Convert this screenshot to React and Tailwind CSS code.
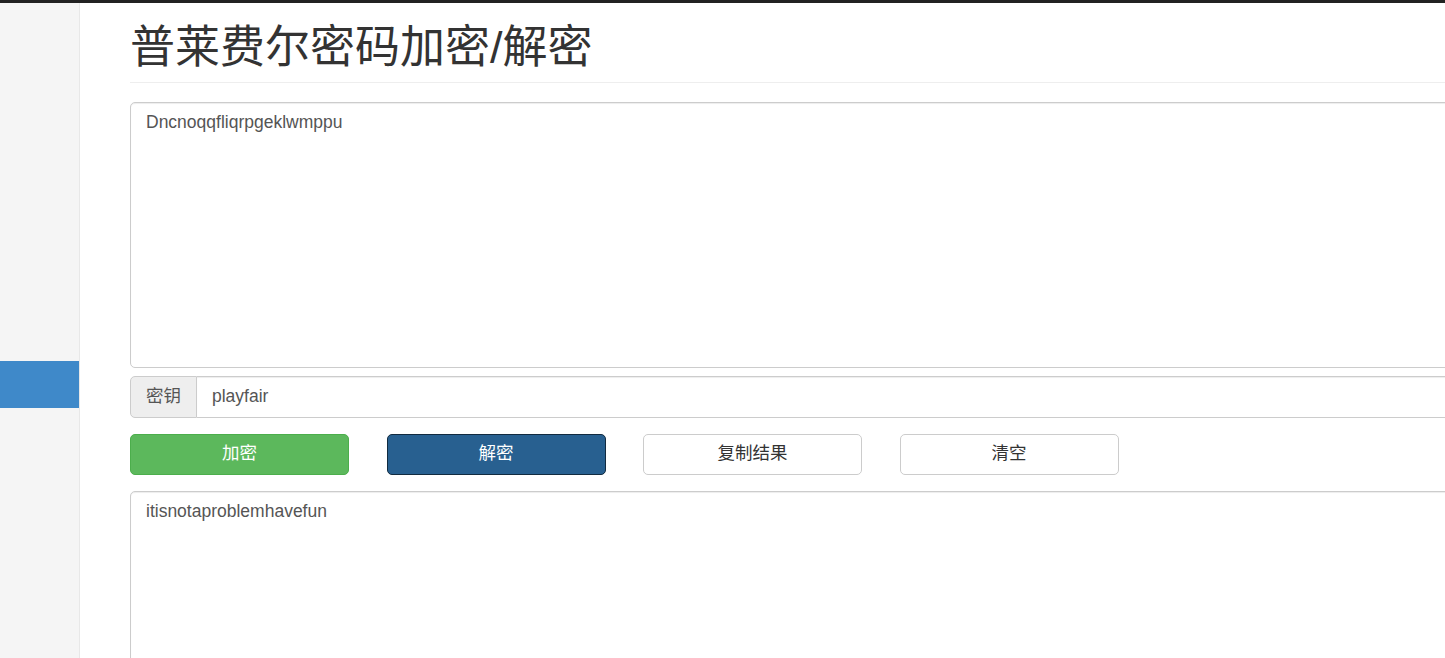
import React from 'react';

const font = { fontFamily: '"Liberation Sans", "Noto Sans CJK SC", sans-serif' };

const Sidebar = () => (
    <aside className="w-[80px] shrink-0 bg-[#f5f5f5] border-r border-[#e8e8e8] pt-[358px]">
        <div className="h-[47px] w-[79px] bg-[#3f89c9]"></div>
    </aside>
);

const Button = ({ children, variant }) => {
    const styles = {
        green: 'bg-[#5cb85c] border-[#4cae4c] text-white',
        blue: 'bg-[#286090] border-[#122b40] text-white',
        plain: 'bg-white border-[#cccccc] text-[#333333]',
    };
    return (
        <button className={`w-[219px] h-[41px] border rounded-[5px] text-[17.5px] leading-none ${styles[variant]}`}>
            {children}
        </button>
    );
};

export default function App() {
    return (
        <div className="w-[1445px] h-[658px] overflow-hidden border-t-[3px] border-[#222222] bg-white text-[#333333]" style={font}>
            <div className="flex h-full">
                <Sidebar />
                <main className="pl-[50px] w-[1460px] shrink-0">
                    <div className="border-b border-[#eeeeee] pt-[20px] pb-[9px]">
                        <h1 className="text-[45px] leading-[1.1] font-normal text-[#333333]">普莱费尔密码加密/解密</h1>
                    </div>

                    <textarea
                        className="block mt-[19px] w-full h-[266px] border border-[#cccccc] rounded-[5px] px-[15px] py-[7.5px] text-[17.5px] leading-[25px] text-[#555555] resize-none shadow-[inset_0_1px_1px_rgba(0,0,0,0.075)] outline-none"
                        defaultValue="Dncnoqqfliqrpgeklwmppu"
                    />

                    <div className="flex mt-[8px] h-[42px]">
                        <span className="flex items-center px-[15px] bg-[#eeeeee] border border-[#cccccc] rounded-l-[5px] text-[17.5px] text-[#555555]">密钥</span>
                        <input
                            className="flex-1 border border-l-0 border-[#cccccc] px-[15px] text-[17.5px] text-[#555555] outline-none shadow-[inset_0_1px_1px_rgba(0,0,0,0.075)]"
                            defaultValue="playfair"
                        />
                    </div>

                    <div className="flex gap-[37.5px] mt-[16px]">
                        <Button variant="green">加密</Button>
                        <Button variant="blue">解密</Button>
                        <Button variant="plain">复制结果</Button>
                        <Button variant="plain">清空</Button>
                    </div>

                    <textarea
                        className="block mt-[16px] w-full h-[266px] border border-[#cccccc] rounded-[5px] px-[15px] py-[7.5px] text-[17.5px] leading-[25px] text-[#555555] resize-none shadow-[inset_0_1px_1px_rgba(0,0,0,0.075)] outline-none"
                        defaultValue="itisnotaproblemhavefun"
                    />
                </main>
            </div>
        </div>
    );
}
